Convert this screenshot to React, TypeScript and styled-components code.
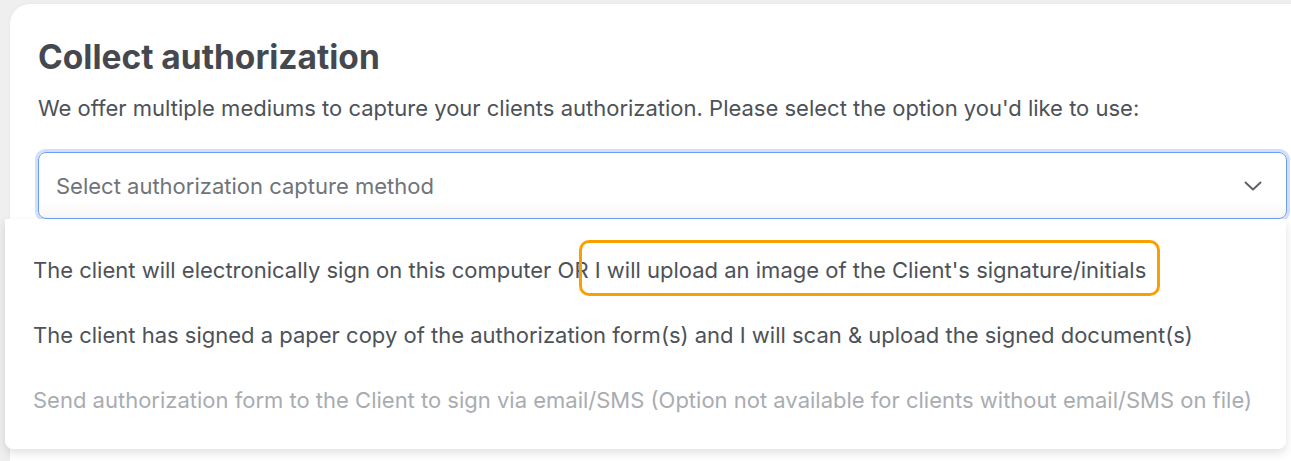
import styled, { createGlobalStyle } from "styled-components";

const GlobalStyle = createGlobalStyle`
  html, body {
    margin: 0;
    padding: 0;
    background: #efefef;
    font-family: Inter, "Noto Sans", sans-serif;
  }
`;

const Page = styled.div`
  width: 1291px;
  height: 461px;
  overflow: hidden;
  padding: 4px 0 0 10px;
  box-sizing: border-box;
`;

const Card = styled.section`
  width: 1310px;
  height: 520px;
  background: #ffffff;
  border-radius: 20px;
  padding: 33px 0 0 28px;
  box-sizing: border-box;
  box-shadow: 0 0 4px rgba(0, 0, 0, 0.04);
`;

const Title = styled.h2`
  margin: 0;
  font-size: 33.5px;
  font-weight: 700;
  color: #45494f;
  line-height: 40px;
`;

const Intro = styled.p`
  margin: 17px 0 0;
  font-size: 22px;
  color: #4d5258;
  line-height: 28px;
`;

const SelectWrap = styled.div`
  position: relative;
  margin-top: 30px;
  width: 1249px;
`;

const SelectBox = styled.div`
  height: 67px;
  box-sizing: border-box;
  border: 1.5px solid #6d9ef3;
  border-radius: 8px;
  box-shadow: 0 0 0 3px rgba(120, 165, 245, 0.35);
  display: flex;
  align-items: center;
  justify-content: space-between;
  padding: 0 24px 0 17px;
  background: linear-gradient(#ffffff 70%, #f7f7f7);
`;

const Placeholder = styled.span`
  font-size: 22px;
  color: #70747a;
`;

const Menu = styled.ul`
  position: absolute;
  top: 67px;
  left: -33px;
  width: 1281px;
  margin: 0;
  padding: 18px 0 17px;
  list-style: none;
  background: #ffffff;
  border-radius: 0 0 8px 8px;
  box-shadow: 0 4px 10px rgba(0, 0, 0, 0.12);
  box-sizing: border-box;
`;

const Option = styled.li<{ $disabled?: boolean }>`
  height: 65px;
  display: flex;
  align-items: center;
  padding-left: 28px;
  font-size: 22px;
  color: ${(p) => (p.$disabled ? "#a9acb1" : "#4d5258")};
  white-space: nowrap;
`;

const Highlight = styled.div`
  position: absolute;
  top: 21px;
  left: 574px;
  width: 581px;
  height: 56px;
  box-sizing: border-box;
  border: 3px solid #f7a000;
  border-radius: 10px;
  pointer-events: none;
`;

const options = [
  {
    label:
      "The client will electronically sign on this computer OR I will upload an image of the Client's signature/initials",
  },
  {
    label:
      "The client has signed a paper copy of the authorization form(s) and I will scan & upload the signed document(s)",
  },
  {
    label:
      "Send authorization form to the Client to sign via email/SMS (Option not available for clients without email/SMS on file)",
    disabled: true,
  },
];

export default function App() {
  return (
    <>
      <GlobalStyle />
      <Page>
        <Card>
          <Title>Collect authorization</Title>
          <Intro>
            We offer multiple mediums to capture your clients authorization.
            Please select the option you'd like to use:
          </Intro>
          <SelectWrap>
            <SelectBox>
              <Placeholder>Select authorization capture method</Placeholder>
              <svg width="18" height="10" viewBox="0 0 18 10" fill="none">
                <path
                  d="M1.5 1.5L9 8.5L16.5 1.5"
                  stroke="#5f6368"
                  strokeWidth="2"
                  strokeLinecap="round"
                  strokeLinejoin="round"
                />
              </svg>
            </SelectBox>
            <Menu>
              {options.map((o) => (
                <Option key={o.label} $disabled={o.disabled}>
                  {o.label}
                </Option>
              ))}
              <Highlight />
            </Menu>
          </SelectWrap>
        </Card>
      </Page>
    </>
  );
}
